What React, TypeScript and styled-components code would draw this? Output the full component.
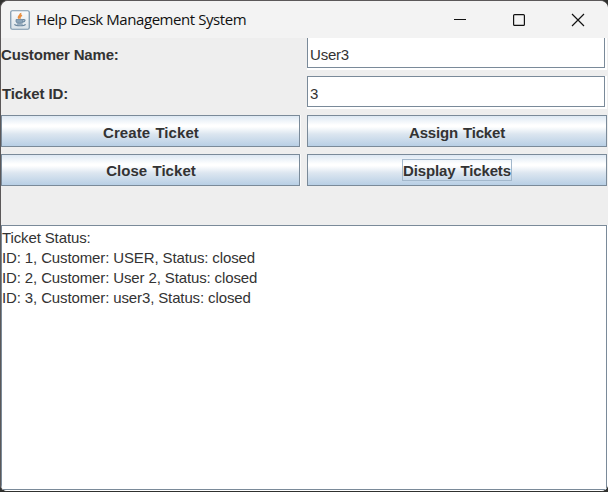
import React from 'react';
import styled, { createGlobalStyle } from 'styled-components';

const GlobalStyle = createGlobalStyle`
  * { box-sizing: border-box; }
  body { margin: 0; background: #30312f; overflow: hidden; }
`;

const Window = styled.main`
  width: 608px;
  height: 492px;
  display: flex;
  flex-direction: column;
  border: solid #5b5859;
  border-width: 1px 0 1px 1px;
  border-bottom-color: #30312f;
  border-radius: 8px 8px 7px 7px;
  overflow: hidden;
  background: #eeeeee;
  color: #333333;
  font-family: 'Liberation Sans', Arial, sans-serif;
  font-size: 15px;
`;

const TitleBar = styled.header`
  flex: none;
  height: 37px;
  display: flex;
  align-items: center;
  padding-left: 9px;
  background: #f3f3f3;
`;

const Title = styled.h1`
  margin: -2px 0 0 6px;
  flex: 1;
  color: #111111;
  font: 400 15px/20px 'Open Sans', 'Noto Sans', sans-serif;
  letter-spacing: -0.43px;
  white-space: nowrap;
`;

const WindowControls = styled.div`
  display: flex;
  gap: 41px;
  padding-right: 21px;
  svg { display: block; }
`;

const FormGrid = styled.section`
  flex: none;
  height: 187px;
  display: grid;
  grid-template-columns: 300px 300px;
  grid-template-rows: 32px 33px 33px 32px;
  row-gap: 6px;
  column-gap: 6px;
  align-content: start;
`;

const FieldLabel = styled.label<{ $inset?: number; $lineHeight: number; $spacing: number }>`
  padding-left: ${p => p.$inset ?? 0}px;
  font-weight: 700;
  line-height: ${p => p.$lineHeight}px;
  letter-spacing: ${p => p.$spacing}px;
  white-space: nowrap;
`;

const FieldFrame = styled.div<{ $clipped?: boolean }>`
  display: flex;
  height: ${p => (p.$clipped ? 32 : 33)}px;
  padding: 0 2px 2px 0;
  background: #ffffff;
`;

const TextInput = styled.input<{ $clipped?: boolean }>`
  width: 298px;
  height: 100%;
  padding: ${p => (p.$clipped ? '3px 0 0 2px' : '4px 0 0 2px')};
  border: 1px solid #7a8a99;
  border-top-width: ${p => (p.$clipped ? 0 : 1)}px;
  border-radius: 0;
  outline: none;
  background: #ffffff;
  color: #333333;
  font: inherit;
  letter-spacing: -0.2px;
`;

const Button = styled.button<{ $narrow?: boolean; $raised?: boolean; $spacing: number }>`
  width: ${p => (p.$narrow ? 299 : 300)}px;
  height: 32px;
  padding: ${p => (p.$raised ? 1 : 3)}px ${p => (p.$narrow ? 0 : 0)}px 0 ${p => (p.$narrow ? 1 : 0)}px;
  border: 1px solid #7a8a99;
  border-radius: 0;
  background: linear-gradient(#dde8f3 0%, #ffffff 30%, #ffffff 36%, #dce6f0 60%, #b8cfe5 100%);
  box-shadow: ${p => (p.$narrow ? '1px 0 0 #fafafa' : 'none')};
  color: #333333;
  font: 700 15px/18px 'Liberation Sans', Arial, sans-serif;
  letter-spacing: ${p => p.$spacing}px;
  word-spacing: 1px;
  white-space: nowrap;
`;

const FocusLabel = styled.span`
  display: inline-block;
  height: 22px;
  margin-top: -2px;
  padding: 2px 0 0;
  border: 1px solid #a3b8cc;
`;

const Output = styled.pre`
  flex: 1;
  width: 606px;
  margin: 0 0 1px;
  padding: 2px 0 0;
  border: 1px solid #7a8a99;
  background: #ffffff;
  box-shadow: 0 0 0 1px #ffffff;
  clip-path: inset(0 -1px -1px 0);
  font: 15px/20px 'Liberation Sans', Arial, sans-serif;
  letter-spacing: -0.125px;
`;

const Line = styled.span`
  display: block;
`;

const JavaIcon = () => (
  <svg width="20" height="20" viewBox="0 0 20 20" fill="none">
    <defs>
      <linearGradient id="tile" x2="0" y2="1">
        <stop stopColor="#fbfcfc" />
        <stop offset="1" stopColor="#d9e2e8" />
      </linearGradient>
    </defs>
    <rect x=".75" y=".75" width="18.5" height="18.5" rx="1.5" fill="url(#tile)" stroke="#7995ab" strokeWidth="1.2" />
    <path d="M10.6 3c.8 2-3.6 3-1.7 5.6M12 5.2c-2.4 1.2-2.5 1.7-1.5 3.5" stroke="#e99042" strokeWidth="1.6" />
    <path d="M6 9.5h7v2.4c-1 1.8-6 1.8-7 0z" fill="#8ba4b8" stroke="#6a879f" strokeWidth=".8" />
    <path d="M13 9.6c3-.6 2.6 2-.5 2.6M4.4 14.3c1.8 2 9.6 2 11.2 0" stroke="#6a879f" strokeWidth="1.1" />
    <path d="M6.8 14.1h6" stroke="#6a879f" />
  </svg>
);

export default function App() {
  return (
    <>
      <GlobalStyle />
      <Window>
        <TitleBar>
          <JavaIcon />
          <Title>Help Desk Management System</Title>
          <WindowControls>
            <svg width="18" height="18" viewBox="0 0 18 18"><path d="M3 8.5h12" stroke="#111" /></svg>
            <svg width="18" height="18" viewBox="0 0 18 18" fill="none"><rect x="3.6" y="3.6" width="10.8" height="10.8" rx="1" stroke="#111" strokeWidth="1.2" /></svg>
            <svg width="18" height="18" viewBox="0 0 18 18"><path d="m3 3 12 12M15 3 3 15" stroke="#111" strokeWidth="1.2" /></svg>
          </WindowControls>
        </TitleBar>
        <FormGrid>
          <FieldLabel htmlFor="customer" $lineHeight={34} $spacing={-0.17}>Customer Name:</FieldLabel>
          <FieldFrame $clipped><TextInput id="customer" $clipped defaultValue="User3" /></FieldFrame>
          <FieldLabel htmlFor="ticket" $inset={1} $lineHeight={36} $spacing={-0.1}>Ticket ID:</FieldLabel>
          <FieldFrame><TextInput id="ticket" defaultValue="3" /></FieldFrame>
          <Button $narrow $spacing={0.07}>Create Ticket</Button>
          <Button $spacing={-0.17}>Assign Ticket</Button>
          <Button $narrow $raised $spacing={0.05}>Close Ticket</Button>
          <Button $raised $spacing={-0.14}><FocusLabel>Display Tickets</FocusLabel></Button>
        </FormGrid>
        <Output>
          <Line>Ticket Status:</Line>
          <Line>ID: 1, Customer: USER, Status: closed</Line>
          <Line>ID: 2, Customer: User 2, Status: closed</Line>
          <Line>ID: 3, Customer: user3, Status: closed</Line>
        </Output>
      </Window>
    </>
  );
}
